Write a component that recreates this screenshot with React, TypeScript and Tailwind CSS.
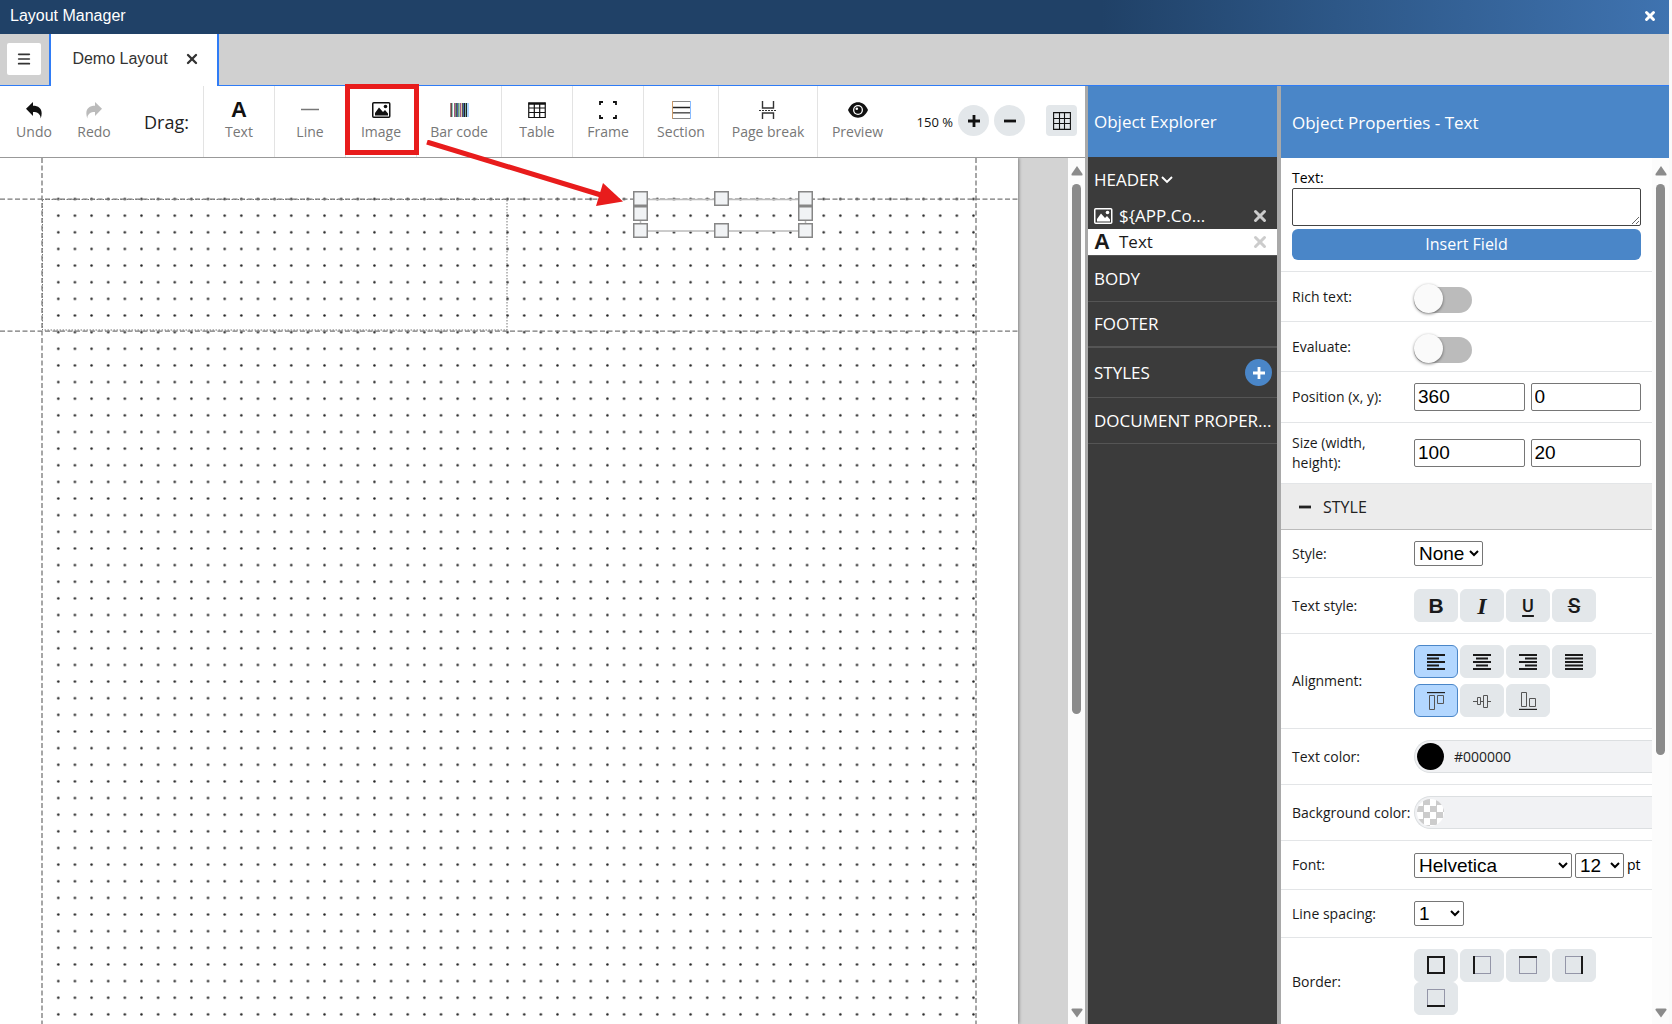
import { useState, type ReactNode } from "react";
import { Menu, X } from "lucide-react";

/* ---------- Icons ---------- */

function UndoIcon({ flip = false }: { flip?: boolean }) {
  return (
    <svg width="18" height="18" viewBox="0 0 18 18" fill="currentColor" className={flip ? "-scale-x-100" : ""}>
      <path d="M1 7.700 8 1v3.800c7 0 10.500 4.500 7.700 12.700C15.500 12.800 12.500 11 8 11v4z" />
    </svg>
  );
}

function LineIcon() {
  return (
    <svg width="18" height="18" viewBox="0 0 18 18">
      <path d="M0 8.500h18" stroke="#777" strokeWidth="1.500" />
    </svg>
  );
}

function ImageIcon() {
  return (
    <svg width="19" height="18" viewBox="0 0 19 18" fill="currentColor">
      <rect x=".75" y="1.750" width="17" height="14.500" rx="1" fill="none" stroke="currentColor" strokeWidth="1.500" />
      <path d="M3 14.500V12l4-5.500 4 4.500 2-2 3 3.500v2z" />
      <circle cx="13.500" cy="5.500" r="1.800" />
    </svg>
  );
}

function BarcodeIcon() {
  return (
    <svg width="19" height="18" viewBox="0 0 19 18" strokeWidth="1">
      <path d="M.500 2v14" stroke="#b77" />
      <path d="M1.500 2v14M6.500 2v14M12.500 2v14" stroke="#555" />
      <path d="M2.500 2v14M9.500 2v14" stroke="#9cb" />
      <path d="M4.500 2v14M10.500 2v14" stroke="#a58" />
      <path d="M5.500 2v14M8.500 2v14" stroke="#797" />
      <path d="M7.500 2v14M13.500 2v14" stroke="#46a" />
      <path d="M11.500 2v14" stroke="#dca" />
      <path d="M14.500 2v14M16.500 2v14" stroke="#222" />
      <path d="M15.500 2v14" stroke="#7a9" />
      <path d="M18 2v14" stroke="#5af" />
    </svg>
  );
}

function TableIcon() {
  return (
    <svg width="18" height="18" viewBox="0 0 18 18" stroke="currentColor" fill="none">
      <path d="M.500 2.500h17" strokeWidth="2.500" />
      <path d="M.750 1.500v15h16.500v-15M1 7h16M1 11.500h16M6.300 3v13M11.700 3v13" strokeWidth="1.200" />
    </svg>
  );
}

function FrameIcon() {
  return (
    <svg width="18" height="18" viewBox="0 0 18 18" stroke="currentColor" fill="none" strokeWidth="1.800">
      <path d="M1 4V1h3M14 1h3v3M17 14v3h-3M4 17H1v-3" />
    </svg>
  );
}

function SectionIcon() {
  return (
    <svg width="19" height="18" viewBox="0 0 19 18" fill="none">
      <path d="M.500.500h18v17H.500z" stroke="#888" />
      <path d="M.500 0v18" stroke="#c96" />
      <path d="M18.500 0v18" stroke="#8bf" />
      <path d="M1 6.500h17" stroke="#222" strokeWidth="1.500" />
      <path d="M1 11.800h17" stroke="#555" strokeWidth="1.500" />
    </svg>
  );
}

function PageBreakIcon() {
  return (
    <svg width="18" height="18" viewBox="0 0 18 18" fill="none" stroke="#333">
      <path d="M3.500 0v7h11V0M3.500 18v-6h11V18" strokeWidth="1.400" />
      <path d="M0 9.500h18" strokeDasharray="2 1" />
    </svg>
  );
}

function EyeIcon() {
  return (
    <svg width="20" height="18" viewBox="0 0 20 18">
      <path d="M0 9C2.500 3.500 6 1.300 10 1.300S17.500 3.500 20 9c-2.500 5.500-6 7.700-10 7.700S2.500 14.500 0 9z" fill="currentColor" />
      <circle cx="10" cy="9" r="5" fill="#fff" />
      <circle cx="10" cy="9" r="3.700" fill="currentColor" />
      <circle cx="8.800" cy="7.800" r="1.300" fill="#fff" />
    </svg>
  );
}

function GridIcon() {
  return (
    <svg width="18" height="18" viewBox="0 0 18 18" fill="none" stroke="currentColor" strokeWidth="1.100">
      <path d="M.600.600h16.800v16.800H.600zM6.500.600v16.800M11.500.600v16.800M.600 6.500h16.800M.600 11.500h16.800" />
    </svg>
  );
}

function SignIcon({ plus = false }: { plus?: boolean }) {
  return (
    <svg width="12" height="12" viewBox="0 0 12 12" stroke="currentColor" strokeWidth="2.800">
      <path d={plus ? "M0 6h12M6 0v12" : "M0 6h12"} />
    </svg>
  );
}

function LinesIcon({ d }: { d: string }) {
  return (
    <svg width="18" height="18" viewBox="0 0 18 18" stroke="currentColor" strokeWidth="2.200">
      <path d={d} />
    </svg>
  );
}

function ThinIcon({ bar, d }: { bar: string; d: string }) {
  return (
    <svg width="18" height="18" viewBox="0 0 18 18" fill="none">
      <path d={d} stroke="#555" />
      <path d={bar} stroke="#222" strokeWidth="1.200" />
    </svg>
  );
}

function BorderIcon({ side }: { side: string }) {
  return (
    <svg width="18" height="18" viewBox="0 0 18 18" fill="none">
      <path d="M.500.500h17v17H.500z" stroke="#446" strokeDasharray="1 1" />
      <path d={side} stroke="currentColor" strokeWidth="2" />
    </svg>
  );
}

/* ---------- Shared pieces ---------- */

function Scrollbar({ thumb }: { thumb: string }) {
  return (
    <div className="flex w-[17px] shrink-0 flex-col items-center gap-2 bg-[#fcfcfc] pt-2 pb-1.5">
      <svg width="12" height="10" viewBox="0 0 12 10" fill="#8b8b8b">
        <path d="M6 0 11.500 8q.500 1.500-1 1.500h-9Q0 9.500.500 8z" />
      </svg>
      <div className="w-[9px] flex-1">
        <div className={`w-full rounded-full bg-[#8b8b8b] ${thumb}`} />
      </div>
      <svg width="12" height="10" viewBox="0 0 12 10" fill="#8b8b8b">
        <path d="M6 9.500 11.500 2q.500-1.500-1-1.500h-9Q0 .500.500 2z" />
      </svg>
    </div>
  );
}

function Tool({ label, children, className = "" }: { label: string; children: ReactNode; className?: string }) {
  return (
    <button className={`flex flex-col items-center justify-center gap-[2px] pb-[2px] ${className}`}>
      <span className="flex h-5 items-center text-[#111]">{children}</span>
      <span className="text-sm leading-5 whitespace-nowrap text-[#777]">{label}</span>
    </button>
  );
}

function Row({ label, htmlFor, children, className }: { label: string; htmlFor?: string; children: ReactNode; className: string }) {
  return (
    <div className={`flex shrink-0 items-center border-b border-[#e3e5e7] px-[11px] ${className}`}>
      <label htmlFor={htmlFor} className="w-[122px] shrink-0 text-sm leading-5 text-[#1a1a1a]">
        {label}
      </label>
      {children}
    </div>
  );
}

function IconButton({ label, active = false, children }: { label: string; active?: boolean; children: ReactNode }) {
  return (
    <button
      aria-label={label}
      className={`flex h-[33px] w-[44px] items-center justify-center rounded-md border text-[#1a1a1a] ${
        active ? "border-[#4a86c8] bg-[#b3d7ff]" : "border-[#e3e7ea] bg-[#e3e7ea]"
      }`}
    >
      {children}
    </button>
  );
}

function Switch({ id }: { id: string }) {
  const [on, setOn] = useState(false);

  return (
    <label className="relative mt-1.5 flex h-[26px] w-[58px] items-center">
      <input id={id} type="checkbox" checked={on} onChange={() => setOn(!on)} className="peer sr-only" />
      <span className="h-[26px] w-full rounded-full bg-[#bbb] peer-checked:bg-[#4a86c8]" />
      <span className="absolute bottom-0 left-0 size-[29px] rounded-full bg-[#fafafa] shadow-[0_1px_3px_rgba(0,0,0,0.5)] peer-checked:right-0 peer-checked:left-auto" />
    </label>
  );
}

const inputClass =
  "h-7 min-w-0 flex-1 rounded-xs border border-[#767676] px-[3px] font-['Liberation_Sans',sans-serif] text-[19px] text-black";
const selectClass =
  "h-[25px] rounded-xs border border-[#767676] bg-white font-['Liberation_Sans',sans-serif] text-[19px] leading-5 text-black";
const colorClass =
  "-mr-[11px] flex h-[33px] min-w-0 flex-1 items-center gap-2.5 rounded-l-full border border-r-0 border-[#dcdfe1] bg-[#f1f2f4] px-[2px]";

/* ---------- Canvas ---------- */

const handles = [
  [633, 33],
  [714, 33],
  [798, 33],
  [633, 48],
  [798, 48],
  [633, 65],
  [714, 65],
  [798, 65],
];

function Sheet() {
  return (
    <div className="relative w-[1018px] shrink-0 overflow-hidden bg-white shadow-[1px_0_3px_rgba(0,0,0,0.4)]">
      <svg className="absolute inset-0 h-full w-full" fill="none">
        <defs>
          <pattern id="dots" x="50" y="32.700" width="16.640" height="16.640" patternUnits="userSpaceOnUse">
            <circle cx="8.300" cy="8.300" r="1.250" fill="#222" />
          </pattern>
        </defs>
        <rect x="50" y="36" width="926" height="100%" fill="url(#dots)" />
        {/* Margins and band limits */}
        <g stroke="#777" strokeDasharray="5 2.500" strokeWidth="1.300">
          <path d="M42 0v900M976 0v900M0 41.200h1018M0 173.200h1018" />
        </g>
        <path d="M42.500 41.500h464.500v130.500h-464.500z" stroke="#777" strokeDasharray="1.500 1.500" />
        {/* Selected element */}
        <rect x="640.500" y="41.500" width="165" height="31.500" stroke="#bbb" strokeWidth="1.500" />
        {handles.map(([x, y]) => (
          <rect key={`${x}-${y}`} x={x + 0.75} y={y + 0.75} width="13.500" height="13.500" fill="#f1f3f5" stroke="#868686" strokeWidth="1.500" />
        ))}
      </svg>
    </div>
  );
}

/* ---------- Object explorer ---------- */

function Explorer() {
  return (
    <aside className="flex w-[189px] shrink-0 flex-col bg-[#3b3b3b] text-[17px] leading-6 text-white">
      <h2 className="flex h-[71px] items-center bg-[#4a86c8] px-1.5">Object Explorer</h2>
      <ul>
        <li>
          <button className="flex h-[45px] w-full items-center gap-[2px] px-1.5">
            HEADER
            <svg width="12" height="8" viewBox="0 0 12 8" fill="none" stroke="currentColor" strokeWidth="1.900">
              <path d="m1 1 5 5 5-5" />
            </svg>
          </button>
          <ul>
            <li className="flex h-[27px] items-center px-1.5">
              <ImageIcon />
              <span className="ml-1.5 flex-1 truncate">{"${APP.Co..."}</span>
              <button aria-label="Remove image" className="mr-[2px] text-[#ccc]">
                <X size={18} strokeWidth={4} />
              </button>
            </li>
            <li className="flex h-[27px] items-center border-b border-[#555] bg-white px-1.5 text-[#1a1a1a]">
              <span className="w-[19px] font-['Liberation_Sans',sans-serif] text-[22px] font-bold">A</span>
              <span className="ml-1.5 flex-1">Text</span>
              <button aria-label="Remove text" className="mr-[2px] text-[#ccc]">
                <X size={18} strokeWidth={4} />
              </button>
            </li>
          </ul>
        </li>
        <li className="flex h-[46px] items-center border-b border-[#555] px-1.5">BODY</li>
        <li className="flex h-[46px] items-center border-b-2 border-[#555] px-1.5">FOOTER</li>
        <li className="flex h-[50px] items-center justify-between border-b border-[#555] pr-[5px] pl-1.5">
          STYLES
          <button aria-label="Add style" className="flex size-[27px] items-center justify-center rounded-full bg-[#4a86c8]">
            <SignIcon plus />
          </button>
        </li>
        <li className="flex h-[46px] items-center border-b border-[#555] px-1.5 whitespace-nowrap">DOCUMENT PROPER...</li>
      </ul>
    </aside>
  );
}

/* ---------- Object properties ---------- */

function Properties() {
  return (
    <aside className="flex w-[388px] shrink-0 flex-col bg-white">
      <h2 className="flex h-[72px] shrink-0 items-center bg-[#4a86c8] px-[11px] pt-[2px] text-[17px] text-white">Object Properties - Text</h2>
      <div className="flex min-h-0 flex-1">
        <div className="flex min-w-0 flex-1 flex-col overflow-hidden">
          <div className="flex h-[114px] shrink-0 flex-col border-b border-[#e3e5e7] px-[11px] pt-2.5">
            <label htmlFor="text" className="text-sm leading-5">
              Text:
            </label>
            <textarea id="text" className="h-[38px] shrink-0 rounded-xs border border-[#444]" />
            <button className="mt-[3px] h-[31px] shrink-0 rounded-md bg-[#4a86c8] pb-[2px] text-base text-white">Insert Field</button>
          </div>
          <Row label="Rich text:" htmlFor="rich" className="h-[50px]">
            <Switch id="rich" />
          </Row>
          <Row label="Evaluate:" htmlFor="evaluate" className="h-[50px]">
            <Switch id="evaluate" />
          </Row>
          <Row label="Position (x, y):" htmlFor="pos-x" className="h-[51px]">
            <div className="flex min-w-0 flex-1 gap-1.5">
              <input id="pos-x" defaultValue="360" className={inputClass} />
              <input aria-label="Position y" defaultValue="0" className={inputClass} />
            </div>
          </Row>
          <Row label="Size (width, height):" htmlFor="width" className="h-[61px]">
            <div className="flex min-w-0 flex-1 gap-1.5">
              <input id="width" defaultValue="100" className={inputClass} />
              <input aria-label="Height" defaultValue="20" className={inputClass} />
            </div>
          </Row>
          <button className="flex h-[46px] shrink-0 items-center gap-3 border-b border-[#bbb] bg-[#ececec] px-[18px] text-base text-[#222]">
            <SignIcon />
            STYLE
          </button>
          <Row label="Style:" htmlFor="style" className="h-12">
            <select id="style" className={`w-[69px] ${selectClass}`}>
              <option>None</option>
            </select>
          </Row>
          <Row label="Text style:" className="h-14">
            <div className="flex gap-[2px]">
              <IconButton label="Bold">
                <span className="font-['Liberation_Sans',sans-serif] text-[21px] leading-6 font-bold">B</span>
              </IconButton>
              <IconButton label="Italic">
                <span className="font-['Liberation_Serif',serif] text-2xl leading-6 font-bold italic">I</span>
              </IconButton>
              <IconButton label="Underline">
                <span className="font-['Roboto',sans-serif] text-lg leading-5 font-medium underline decoration-2 underline-offset-3">U</span>
              </IconButton>
              <IconButton label="Strikethrough">
                <span className="font-['Roboto',sans-serif] text-[21px] leading-6 font-medium line-through decoration-1">S</span>
              </IconButton>
            </div>
          </Row>
          <Row label="Alignment:" className="h-[95px]">
            <div className="flex w-[188px] flex-wrap gap-x-[2px] gap-y-1.5">
              <IconButton label="Align left" active>
                <LinesIcon d="M0 2h18M0 5.500h12M0 9h18M0 12.500h12M0 16h18" />
              </IconButton>
              <IconButton label="Align center">
                <LinesIcon d="M0 2h18M3 5.500h12M0 9h18M3 12.500h12M0 16h18" />
              </IconButton>
              <IconButton label="Align right">
                <LinesIcon d="M0 2h18M6 5.500h12M0 9h18M6 12.500h12M0 16h18" />
              </IconButton>
              <IconButton label="Justify">
                <LinesIcon d="M0 2h18M0 5.500h18M0 9h18M0 12.500h18M0 16h18" />
              </IconButton>
              <IconButton label="Align top" active>
                <ThinIcon bar="M0 .600h18" d="M2.500 3.500h5v14h-5zM10.500 3.500h6v8h-6z" />
              </IconButton>
              <IconButton label="Align middle">
                <ThinIcon bar="" d="M0 9.500h4M7.500 9.500h3M14.500 9.500h3.500M4.500 5.500h3v7h-3zM10.500 3.500h4v12h-4z" />
              </IconButton>
              <IconButton label="Align bottom">
                <ThinIcon bar="M0 17.400h18" d="M2.500.500h5v14h-5zM10.500 6.500h6v8h-6z" />
              </IconButton>
            </div>
          </Row>
          <Row label="Text color:" htmlFor="color" className="h-14">
            <div className={colorClass}>
              <span className="size-[27px] shrink-0 rounded-full bg-black" />
              <input id="color" defaultValue="#000000" className="min-w-0 flex-1 text-sm text-[#222]" />
            </div>
          </Row>
          <Row label="Background color:" htmlFor="background" className="h-14">
            <div className={colorClass}>
              <span className="size-[27px] shrink-0 rounded-full bg-[conic-gradient(#ccc_25%,#fff_0_50%,#ccc_0_75%,#fff_0)] bg-size-[13px_13px]" />
              <input id="background" className="min-w-0 flex-1 text-sm" />
            </div>
          </Row>
          <Row label="Font:" htmlFor="font" className="h-[49px]">
            <div className="flex items-center gap-[3px] text-sm">
              <select id="font" className={`w-[158px] ${selectClass}`}>
                <option>Helvetica</option>
              </select>
              <select aria-label="Font size" className={`w-[49px] ${selectClass}`}>
                <option>12</option>
              </select>
              pt
            </div>
          </Row>
          <Row label="Line spacing:" htmlFor="spacing" className="h-12">
            <select id="spacing" className={`w-[50px] ${selectClass}`}>
              <option>1</option>
            </select>
          </Row>
          <Row label="Border:" className="h-[88px]">
            <div className="flex w-[188px] flex-wrap gap-x-[2px]">
              <IconButton label="All borders">
                <BorderIcon side="M1 1h16v16H1z" />
              </IconButton>
              <IconButton label="Left border">
                <BorderIcon side="M1 0v18" />
              </IconButton>
              <IconButton label="Top border">
                <BorderIcon side="M0 1h18" />
              </IconButton>
              <IconButton label="Right border">
                <BorderIcon side="M17 0v18" />
              </IconButton>
              <IconButton label="Bottom border">
                <BorderIcon side="M0 17h18" />
              </IconButton>
            </div>
          </Row>
        </div>
        <Scrollbar thumb="h-[70%]" />
      </div>
    </aside>
  );
}

export default function App() {
  return (
    <div className="flex h-screen flex-col bg-[#fafafa] pr-[3px] font-['Open_Sans',sans-serif]">
      <header className="flex h-[34px] shrink-0 items-center justify-between bg-[linear-gradient(90deg,#204167_66%,#2d5787_80%,#3f73b0)] px-3 pb-[3px] pl-2.5 font-['Liberation_Sans',sans-serif] text-base text-white">
        <h1>Layout Manager</h1>
        <button aria-label="Close window">
          <X size={14} strokeWidth={5} />
        </button>
      </header>

      {/* Tabs */}
      <nav className="flex h-[52px] shrink-0 bg-[#d0d0d0] font-['Liberation_Sans',sans-serif] text-[#333]">
        <div className="flex w-[49px] items-center border-b border-[#2f7cf6] pb-[2px] pl-[7px]">
          <button aria-label="Menu" className="flex h-8 w-[34px] items-center justify-center rounded-xs bg-white">
            <Menu size={16} strokeWidth={2.5} />
          </button>
        </div>
        <div className="flex w-[170px] items-center justify-center gap-4 border-x-2 border-[#2f7cf6] bg-white pb-[3px] pl-1">
          <a href="#demo">Demo Layout</a>
          <button aria-label="Close tab">
            <X size={16} strokeWidth={3.5} />
          </button>
        </div>
        <div className="flex-1 border-b border-[#2f7cf6]" />
      </nav>

      <main className="flex min-h-0 flex-1">
        <section className="flex min-w-0 flex-1 flex-col">
          {/* Toolbar */}
          <div className="relative z-10 flex h-[72px] shrink-0 border-b border-[#999] bg-white pl-1">
            <Tool label="Undo" className="w-[60px]">
              <UndoIcon />
            </Tool>
            <Tool label="Redo" className="w-[60px]">
              <span className="text-[#bbb]">
                <UndoIcon flip />
              </span>
            </Tool>
            <span className="flex w-[79px] items-center justify-center pl-1.5 text-lg text-[#222]">Drag:</span>
            <div className="flex divide-x divide-[#e3e3e3] border-l border-[#e3e3e3]">
              <Tool label="Text" className="w-[71px]">
                <span className="font-['Liberation_Sans',sans-serif] text-[22px] font-bold">A</span>
              </Tool>
              <Tool label="Line" className="w-[71px]">
                <LineIcon />
              </Tool>
              <div className="relative flex w-[71px]">
                <Tool label="Image" className="w-full">
                  <ImageIcon />
                </Tool>
                <span className="pointer-events-none absolute -top-0.5 -left-px h-[71px] w-[74px] border-5 border-[#e81c1c]" />
              </div>
              <Tool label="Bar code" className="w-[85px]">
                <BarcodeIcon />
              </Tool>
              <Tool label="Table" className="w-[71px]">
                <TableIcon />
              </Tool>
              <Tool label="Frame" className="w-[71px]">
                <FrameIcon />
              </Tool>
              <Tool label="Section" className="w-[75px]">
                <SectionIcon />
              </Tool>
              <Tool label="Page break" className="w-[99px]">
                <PageBreakIcon />
              </Tool>
              <Tool label="Preview" className="w-[79px]">
                <EyeIcon />
              </Tool>
            </div>
            <div className="ml-auto flex items-center gap-[5px] pr-2 pb-[2px] text-[#111]">
              <span className="pt-1 text-[13px]">150 %</span>
              <button aria-label="Zoom in" className="flex size-[31px] items-center justify-center rounded-full bg-[#e3e7ea]">
                <SignIcon plus />
              </button>
              <button aria-label="Zoom out" className="flex size-[31px] items-center justify-center rounded-full bg-[#e3e7ea]">
                <SignIcon />
              </button>
              <button aria-label="Toggle grid" className="ml-4 flex size-[31px] items-center justify-center rounded-sm bg-[#e3e7ea]">
                <GridIcon />
              </button>
            </div>
            {/* Drag hint */}
            <svg className="pointer-events-none absolute top-[54px] left-[426px]" width="198" height="68" viewBox="0 0 198 68">
              <path d="M1 2 175 55" stroke="#e81c1c" strokeWidth="5" />
              <path d="m177 43 20 18.500-27 4.500z" fill="#e81c1c" />
            </svg>
          </div>
          <div className="flex min-h-0 flex-1 bg-[#d3d3d3]">
            <div className="flex min-w-0 flex-1 overflow-hidden">
              <Sheet />
            </div>
            <Scrollbar thumb="h-[65%]" />
          </div>
        </section>
        <div className="w-[3px] bg-[#a9a9a9]" />
        <Explorer />
        <div className="w-1 bg-[#a9a9a9]" />
        <Properties />
      </main>
    </div>
  );
}
